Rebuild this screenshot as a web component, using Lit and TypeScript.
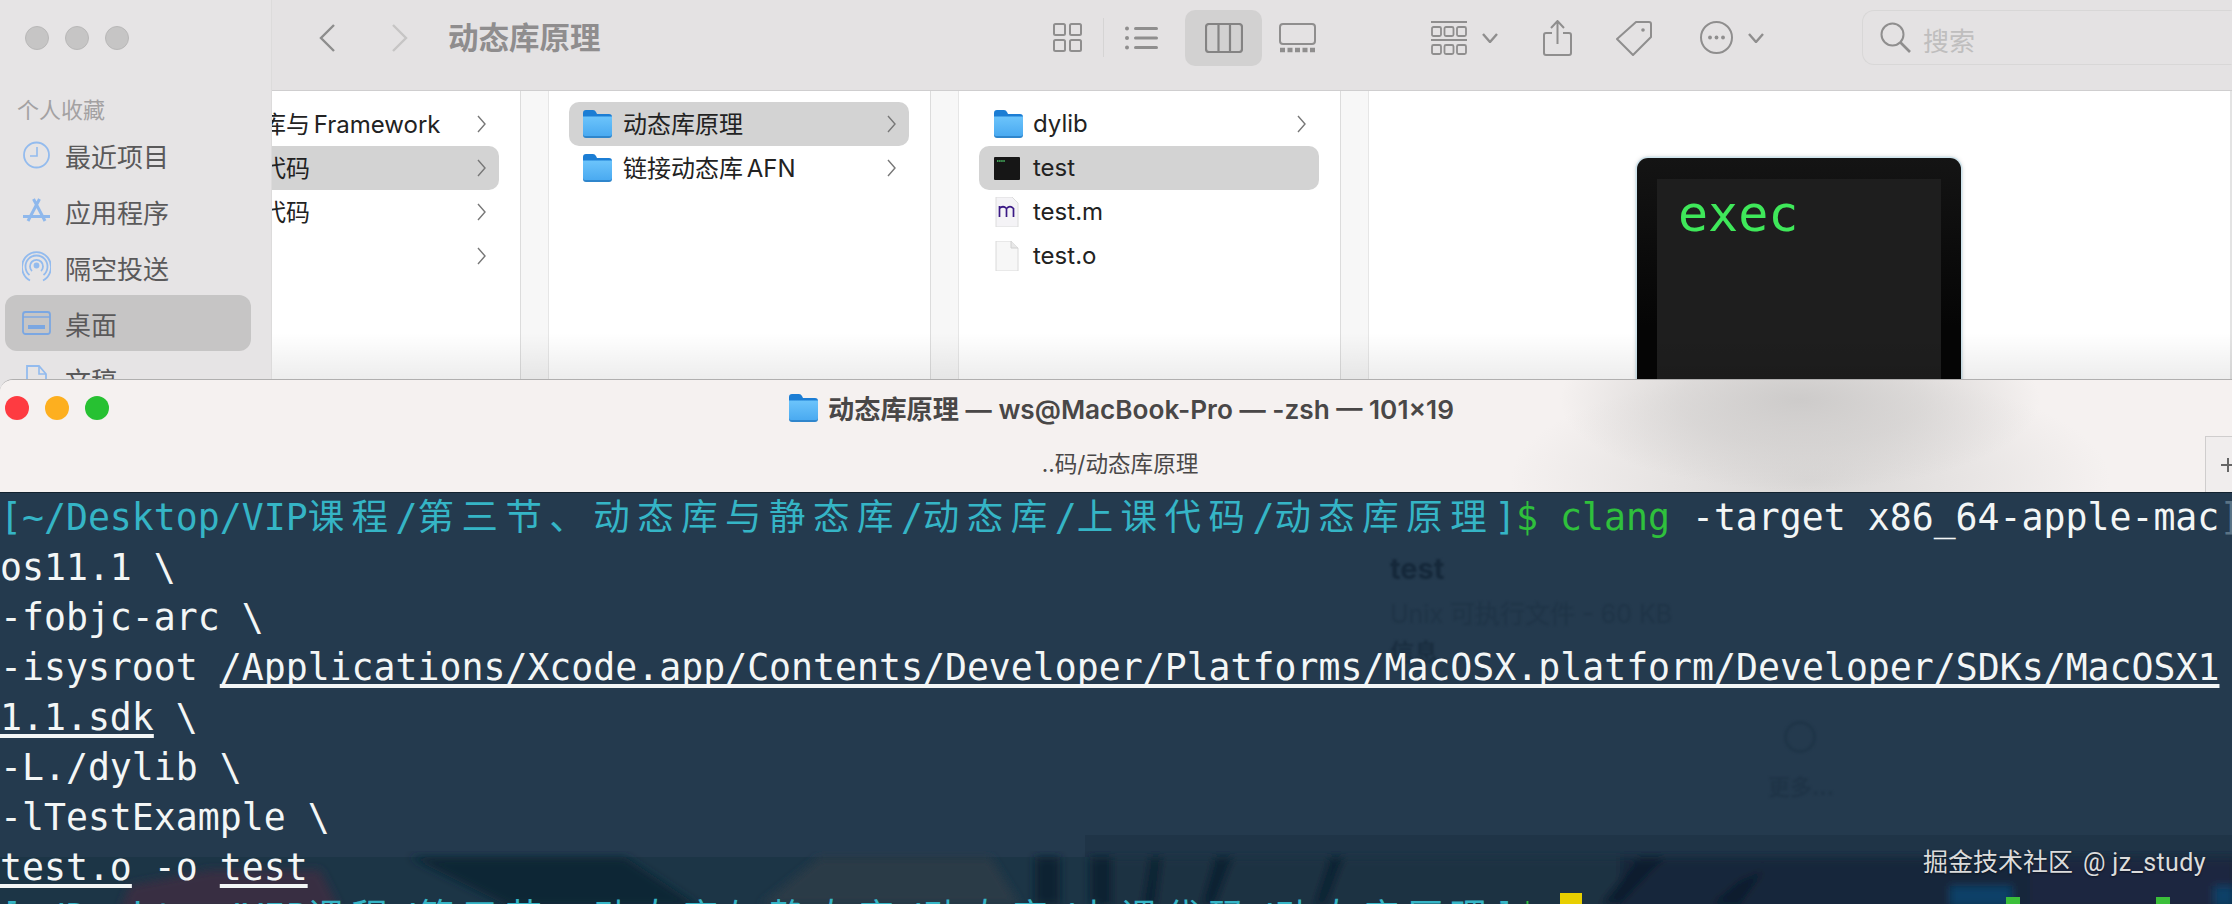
import { LitElement, html, css, svg } from "lit";
import { customElement } from "lit/decorators.js";

const chevron = svg`<svg class="chev" viewBox="0 0 9 18"><path d="M1 1l7 8-7 8" fill="none" stroke="#777" stroke-width="1.4"/></svg>`;

const folder = html`<svg class="folder" viewBox="0 0 29 28">
  <defs><linearGradient id="fb" x1="0" y1="0" x2="0" y2="1"><stop offset="0" stop-color="#6cc4fb"/><stop offset="1" stop-color="#4aaaf1"/></linearGradient></defs>
  <path d="M0 3q0-3 3-3h7q2 0 3 2l1 2h12q3 0 3 3v6H0z" fill="#1b7dd4"/>
  <path d="M0 7h29v18q0 3-3 3H3q-3 0-3-3z" fill="#2f86cc"/>
  <path d="M0 6.5h29V24q0 2-2 2H2q-2 0-2-2z" fill="url(#fb)"/>
</svg>`;

const cjk = (s: string) => html`<span class="cjk">${s}</span>`;

const promptPath = html`[~/Desktop/VIP${cjk("课程")}/${cjk("第三节、动态库与静态库")}/${cjk("动态库")}/${cjk("上课代码")}/${cjk("动态库原理")}]`;

@customElement("app-root")
export class AppRoot extends LitElement {
  static styles = css`
    :host { display: block; width: 2232px; height: 904px; overflow: hidden; background: #e6e4e5;
      font-family: Inter, "Noto Sans CJK SC", sans-serif; }
    * { box-sizing: border-box; }
    svg { display: block; flex: none; }
    .finder { position: relative; display: flex; height: 379px; overflow: hidden; background: #fff; }
    .fade { position: absolute; left: 0; right: 0; bottom: 0; height: 46px; pointer-events: none;
      background: linear-gradient(to bottom, rgba(0,0,0,0), rgba(0,0,0,.07)); }

    .sidebar { width: 272px; flex: none; background: #e6e4e5; padding-top: 26px; overflow: hidden; position: relative; z-index: 1; border-right: 1px solid #dcdbdb; }
    .lights { display: flex; gap: 16px; padding-left: 25px; }
    .lights i { width: 24px; height: 24px; border-radius: 50%; background: #c6c5c5; border: 1px solid #b9b8b8; }
    .label { margin: 46px 0 3px 17px; height: 28px; line-height: 28px; font-size: 22px; color: #a3a1a2; }
    .item { display: flex; align-items: center; height: 56px; margin: 0 20px 0 5px; padding-left: 17px; gap: 14px;
      font-size: 26px; color: #5a595a; border-radius: 12px; white-space: nowrap; }
    .item svg { width: 29px; height: 32px; }
    .item.sel { background: #c6c5c5; }

    .main { flex: 1; min-width: 0; display: flex; flex-direction: column; }
    .toolbar { height: 91px; flex: none; display: flex; align-items: center; padding-bottom: 15px; background: #e4e2e3; border-bottom: 1px solid #cfcecf; }
    .back { margin-left: 47px; width: 16px; height: 28px; }
    .fwd { margin-left: 57px; width: 16px; height: 28px; }
    .title { margin-left: 40px; width: 152px; font-size: 30.5px; font-weight: 700; color: #8f8d8e; white-space: nowrap; line-height: 40px; }
    .t-grid { margin-left: 453px; width: 29px; height: 29px; }
    .sep { margin-left: 21px; width: 1px; height: 39px; background: #d5d4d4; }
    .t-list { margin-left: 21px; width: 33px; height: 24px; }
    .t-colbtn { margin-left: 27px; width: 77px; height: 56px; border-radius: 10px; background: #d2d1d1; display: flex; align-items: center; justify-content: center; }
    .t-col { width: 38px; height: 30px; }
    .t-gal { margin-left: 17px; width: 37px; height: 30px; }
    .t-group { margin-left: 115px; width: 36px; height: 34px; }
    .t-chev { margin-left: 15px; width: 16px; height: 10px; }
    .t-share { margin-left: 45px; width: 29px; height: 36px; }
    .t-tag { margin-left: 44px; width: 36px; height: 36px; }
    .t-more { margin-left: 48px; width: 33px; height: 33px; }
    .search { margin-left: 98px; width: 370px; height: 55px; border: 1.5px solid #d8d7d7; border-right-color: transparent; border-radius: 12px 0 0 12px; display: flex; align-items: center; padding-left: 17px; gap: 12px; font-size: 26px; color: #bfbebe; }
    .search svg { width: 31px; height: 31px; }
    .search span { padding-top: 3px; }

    .cols { flex: 1; display: flex; min-height: 0; }
    .col { flex: none; padding-top: 11px; overflow: hidden; }
    .c1 { width: 248px; }
    .c2 { width: 381px; padding-left: 20px; padding-right: 21px; }
    .c3 { width: 381px; padding-left: 20px; padding-right: 21px; }
    .strip { flex: none; width: 29px; background: #f7f7f7; border-left: 1px solid #dcdcdc; border-right: 1px solid #e6e6e6; }
    .row { display: flex; align-items: center; height: 44px; border-radius: 10px; font-size: 24px; color: #222; white-space: nowrap; padding-left: 14px; padding-right: 13px; }
    .row.sel { background: #d3d3d3; }
    .c1 .row { margin-left: -10px; margin-right: 21px; padding-left: 0; }
    .rowtxt { margin-left: 11px; margin-bottom: 3px; word-spacing: -3px; }
    .c1 .rowtxt { margin-left: 0; }
    .c3 .rowtxt { margin-left: 13px; margin-bottom: 2px; }
    .c3 .folder + .rowtxt { margin-left: 10px; }
    .folder { width: 29px; height: 28px; }
    .c3 .row { padding-left: 15px; }
    .chev { width: 9px; height: 18px; margin-left: auto; }
    .ficon { width: 26px; height: 30px; }
    .preview { flex: 1; min-width: 0; padding: 67px 0 0 268px; border-right: 2px solid #e3e3e3; overflow: hidden; }
    .bigicon { width: 324px; height: 240px; background: linear-gradient(#141414, #050505 70%); border-radius: 11px 11px 0 0; padding: 21px 20px 0; box-shadow: 0 0 0 1.5px #cfe5ee, 0 0 5px rgba(0,0,0,.25); }
    .screen { height: 219px; background: #1e1e1e; padding: 0 21px; font-family: "DejaVu Sans Mono", monospace; font-size: 50px; line-height: 70px; color: #3fe85a; }

    .term { position: relative; height: 525px; border-top: 1px solid #b0afaf; border-radius: 13px 0 0 0; overflow: hidden; display: flex; flex-direction: column; background: #f5f1f0; }
    .head { position: relative; height: 112px; flex: none;
      background: radial-gradient(ellipse 240px 90px at 1800px 20px, #cdcbca 0%, rgba(205,203,202,.6) 50%, rgba(245,241,240,0) 100%),
                  radial-gradient(ellipse 300px 110px at 1810px 100px, rgba(214,212,211,.9) 0%, rgba(245,241,240,0) 100%), #f5f1f0; }
    .tl { display: flex; gap: 16px; padding: 16px 0 0 5px; position: absolute; left: 0; top: 0; }
    .tl i { width: 24px; height: 24px; border-radius: 50%; }
    .r { background: #fe3b41; } .y { background: #fdaf1f; } .g { background: #27c132; }
    .ttl { display: flex; align-items: center; justify-content: center; gap: 10px; height: 54px; padding: 1px 0 0 11px; font-size: 26.2px; font-weight: 600; color: #494747; white-space: nowrap; }
    .ttl .folder { width: 29px; height: 28px; }
    .sub { text-align: center; font-size: 22.6px; line-height: 30px; margin-top: 15px; padding-left: 8px; color: #4a4848; }
    .plus { position: absolute; right: 0; bottom: 0; width: 27px; height: 56px; background: #f0eded; border: 1px solid #cfcdcd; border-right: 0; border-bottom: 0; }
    .plus::before { content: ""; position: absolute; left: 15px; top: 27px; width: 12px; height: 2px; background: #666; }
    .plus::after { content: ""; position: absolute; left: 21px; top: 21px; width: 2px; height: 14px; background: #666; }

    .body { position: relative; flex: 1; min-height: 0; overflow: hidden; background: #243a4e; border-top: 1px solid #12222f; }
    .wall { position: absolute; left: 0; bottom: 0; width: 2232px; height: 69px; }
    .ghost { position: absolute; left: 0; top: 0; color: #1a2d3f; filter: blur(1.2px); white-space: nowrap; font-family: Inter, "Noto Sans CJK SC", sans-serif; }
    .gh-name { left: 1390px; top: 58px; font-size: 29px; font-weight: 700; color: #15283a; }
    .gh-kind { left: 1390px; top: 101px; font-size: 25px; color: #1f3447; }
    .gh-info { left: 1390px; top: 140px; font-size: 24px; font-weight: 700; color: #1a2e40; }
    .gh-more { left: 1768px; top: 276px; font-size: 22px; font-weight: 700; color: #1f3447; }
    .gh-circ { left: 1784px; top: 228px; width: 32px; height: 32px; border: 3px solid #1f3548; border-radius: 50%; }
    .text { position: relative; font-family: "DejaVu Sans Mono", "Noto Sans CJK SC", monospace; font-size: 36.5px; color: #f3f6f6; }
    .ln { height: 50px; line-height: 50px; white-space: pre; }
    .cjk { font-family: "Noto Sans CJK SC", sans-serif; letter-spacing: 7.44px; line-height: 0; }
    .cy { color: #35b5c6; }
    .gr { color: #2fc03c; }
    .u { text-decoration: underline; text-decoration-thickness: 4px; text-underline-offset: 4px; text-decoration-skip-ink: none; }
    .edge { color: #5b7385; }
    .cur { display: inline-block; width: 22px; height: 44px; background: #e8cf00; vertical-align: top; }
    .mark { position: absolute; right: 26px; bottom: 25px; font-size: 25px; line-height: 32px; color: #dcdcdc; white-space: nowrap; text-shadow: 0 1px 2px rgba(0,0,0,.5); }
    .mark b { font-weight: 400; font-family: Roboto, sans-serif; margin-left: 10px; letter-spacing: .4px; }
  `;

  render() {
    const g = "#8f8e8e";
    return html`
      <div class="finder">
        <div class="sidebar">
          <div class="lights"><i></i><i></i><i></i></div>
          <div class="label">个人收藏</div>
          <div class="item"><svg viewBox="0 0 29 32"><circle cx="14.5" cy="16" r="12.5" fill="none" stroke="#93bbee" stroke-width="1.8"/><path d="M15 8v9H8" fill="none" stroke="#93bbee" stroke-width="1.6"/></svg>最近项目</div>
          <div class="item"><svg viewBox="0 0 29 32"><path d="M17.5 4L6 26M11.500 4L23 26" fill="none" stroke="#8fb8ec" stroke-width="3"/><path d="M1 21.500h27" stroke="#8fb8ec" stroke-width="3"/></svg>应用程序</div>
          <div class="item"><svg viewBox="0 0 29 32" fill="none" stroke="#93bbee" stroke-width="1.8"><circle cx="14.5" cy="14.5" r="2" fill="#93bbee"/><path d="M10 20a6.5 6.5 0 1 1 9 0"/><path d="M7.5 24a11 11 0 1 1 14 0"/><path d="M8 29.5A14.5 15 0 1 1 21 29.5"/></svg>隔空投送</div>
          <div class="item sel"><svg viewBox="0 0 29 32"><rect x="1" y="5" width="27" height="22" rx="2.5" fill="none" stroke="#7ba7e2" stroke-width="1.8"/><path d="M1 10h27" stroke="#7ba7e2" stroke-width="1.4"/><rect x="6" y="18" width="17" height="4" fill="#7ba7e2"/></svg>桌面</div>
          <div class="item"><svg viewBox="0 0 29 32"><path d="M5 3h12l7 8v18H5z" fill="none" stroke="#93bbee" stroke-width="1.8"/><path d="M17 3v8h7" fill="none" stroke="#93bbee" stroke-width="1.6"/></svg>文稿</div>
        </div>
        <div class="main">
          <div class="toolbar">
            <svg class="back" viewBox="0 0 16 28"><path d="M15 1L2 14l13 13" fill="none" stroke="#8d8d8d" stroke-width="2.4"/></svg>
            <svg class="fwd" viewBox="0 0 16 28"><path d="M1 1l13 13L1 27" fill="none" stroke="#c6c5c5" stroke-width="2.4"/></svg>
            <div class="title">动态库原理</div>
            <svg class="t-grid" viewBox="0 0 29 29" fill="none" stroke="${g}" stroke-width="2"><rect x="1" y="1" width="11" height="11" rx="1.5"/><rect x="17" y="1" width="11" height="11" rx="1.5"/><rect x="1" y="17" width="11" height="11" rx="1.5"/><rect x="17" y="17" width="11" height="11" rx="1.5"/></svg>
            <div class="sep"></div>
            <svg class="t-list" viewBox="0 0 33 24" fill="${g}"><circle cx="2" cy="2.5" r="2"/><circle cx="2" cy="12" r="2"/><circle cx="2" cy="21.5" r="2"/><rect x="9" y="1" width="24" height="3" rx="1.5"/><rect x="9" y="10.5" width="24" height="3" rx="1.5"/><rect x="9" y="20" width="24" height="3" rx="1.5"/></svg>
            <div class="t-colbtn"><svg class="t-col" viewBox="0 0 38 30" fill="none" stroke="#848383" stroke-width="2.2"><rect x="1" y="1" width="36" height="28" rx="3"/><path d="M13.5 1v28M25 1v28"/></svg></div>
            <svg class="t-gal" viewBox="0 0 37 30" fill="none" stroke="${g}" stroke-width="2"><rect x="1" y="1" width="35" height="20" rx="3"/><path d="M1 27h35" stroke-width="4.5" stroke-dasharray="5 2.5"/></svg>
            <svg class="t-group" viewBox="0 0 36 34" fill="none" stroke="${g}" stroke-width="1.8"><path d="M0 1h36M0 19h36" stroke-width="2"/><rect x="1" y="6" width="9" height="9" rx="1.5"/><rect x="13.5" y="6" width="9" height="9" rx="1.5"/><rect x="26" y="6" width="9" height="9" rx="1.5"/><rect x="1" y="24" width="9" height="9" rx="1.5"/><rect x="13.5" y="24" width="9" height="9" rx="1.5"/><rect x="26" y="24" width="9" height="9" rx="1.5"/></svg>
            <svg class="t-chev" viewBox="0 0 16 10"><path d="M1 1l7 8 7-8" fill="none" stroke="${g}" stroke-width="2.4"/></svg>
            <svg class="t-share" viewBox="0 0 29 36" fill="none" stroke="${g}" stroke-width="2"><path d="M9 13H3q-2 0-2 2v18q0 2 2 2h23q2 0 2-2V15q0-2-2-2h-6"/><path d="M14.5 24V2M8 8l6.5-7L21 8"/></svg>
            <svg class="t-tag" viewBox="0 0 36 36" fill="none" stroke="${g}" stroke-width="2"><path d="M20 2h13q2 0 2 2v13L17 35 1 19z" stroke-linejoin="round"/><circle cx="27" cy="10" r="1.8" fill="${g}" stroke="none"/></svg>
            <svg class="t-more" viewBox="0 0 33 33" fill="none" stroke="${g}" stroke-width="2"><circle cx="16.5" cy="16.5" r="15.5"/><g fill="${g}" stroke="none"><circle cx="10" cy="16.5" r="1.9"/><circle cx="16.5" cy="16.5" r="1.9"/><circle cx="23" cy="16.5" r="1.9"/></g></svg>
            <svg class="t-chev" viewBox="0 0 16 10"><path d="M1 1l7 8 7-8" fill="none" stroke="${g}" stroke-width="2.4"/></svg>
            <div class="search"><svg viewBox="0 0 31 31" fill="none" stroke="#8f8e8e" stroke-width="2"><circle cx="12.5" cy="12.5" r="11"/><path d="M20.5 20.5L30 30" stroke-width="2.6"/></svg><span>搜索</span></div>
          </div>
          <div class="cols">
            <div class="col c1">
              <div class="row"><span class="rowtxt">库与 Framework</span>${chevron}</div>
              <div class="row sel"><span class="rowtxt">代码</span>${chevron}</div>
              <div class="row"><span class="rowtxt">代码</span>${chevron}</div>
              <div class="row">${chevron}</div>
            </div>
            <div class="strip"></div>
            <div class="col c2">
              <div class="row sel">${folder}<span class="rowtxt">动态库原理</span>${chevron}</div>
              <div class="row">${folder}<span class="rowtxt">链接动态库 AFN</span>${chevron}</div>
            </div>
            <div class="strip"></div>
            <div class="col c3">
              <div class="row">${folder}<span class="rowtxt">dylib</span>${chevron}</div>
              <div class="row sel"><svg class="ficon" viewBox="0 0 26 30"><rect x="0" y="4" width="26" height="23" rx="1" fill="#161616"/><path d="M3 8h8" stroke="#4ecb6a" stroke-width="1.6" stroke-dasharray="1.5 .6"/></svg><span class="rowtxt">test</span></div>
              <div class="row"><svg class="ficon" viewBox="0 0 26 30"><path d="M2 0h16l6 6v24H2z" fill="#f4f3f6" stroke="#dcdcdc"/><path d="M5.500 20V9m0 2.500q3.500-3.500 7 0V20m0-8.500q3.500-3.500 7 0V20" fill="none" stroke="#3b1a86" stroke-width="1.7"/></svg><span class="rowtxt">test.m</span></div>
              <div class="row"><svg class="ficon" viewBox="0 0 26 30"><path d="M2 0h15l7 7v23H2z" fill="#f7f7f7" stroke="#dadada"/><path d="M17 0v7h7" fill="#e8e8e8" stroke="#d0d0d0"/></svg><span class="rowtxt">test.o</span></div>
            </div>
            <div class="strip"></div>
            <div class="preview"><div class="bigicon"><div class="screen">exec</div></div></div>
          </div>
        </div>
        <div class="fade"></div>
      </div>
      <div class="term">
        <div class="head">
          <div class="tl"><i class="r"></i><i class="y"></i><i class="g"></i></div>
          <div class="ttl">${folder}<span>动态库原理 — ws@MacBook-Pro — -zsh — 101×19</span></div>
          <div class="sub">..码/动态库原理</div>
          <div class="plus"></div>
        </div>
        <div class="body">
          <svg class="wall" viewBox="0 835 2232 69" preserveAspectRatio="none">
            <defs><filter id="bl"><feGaussianBlur stdDeviation="4"/></filter></defs>
            <rect x="1085" y="835" width="1147" height="22" fill="#1f3447"/>
            <rect x="0" y="857" width="2232" height="47" fill="#1c3546"/>
            <g filter="url(#bl)">
              <rect x="1100" y="857" width="520" height="60" fill="#1a3142"/>
              <rect x="1620" y="857" width="620" height="60" fill="#17263a"/>
              <path d="M130 885l80-15h110l20 40H120z" fill="#392d43"/>
              <path d="M410 857h215l75 50H510z" fill="#0f2536"/>
              <path d="M760 905l60-48h170l30 48z" fill="#2a3a46"/>
              <path d="M1035 857h25v48h-25zM1090 857h22v48h-22zM1150 857h12l-6 48h-14zM1215 857h18l-18 48h-14zM1330 857h14l-18 48h-12z" fill="#0f2433"/>
              <path d="M1640 857l-40 48h20l45-48zM1740 880l-30 25h30l25-35z" fill="#0f1e2e"/>
              <path d="M2030 860h202v45H2030z" fill="#1f2541"/>
              <path d="M1950 886h62v20h-62zM2214 886h20v20h-20z" fill="#114068"/>
            </g>
            <path d="M2006 897h14v8h-14zM2156 897h14v8h-14z" fill="#3bbf3a"/>
          </svg>
          <div class="ghost gh-name">test</div>
          <div class="ghost gh-kind">Unix 可执行文件 - 60 KB</div>
          <div class="ghost gh-info">信息</div>
          <div class="ghost gh-circ"></div>
          <div class="ghost gh-more">更多...</div>
          <div class="text">
            <div class="ln"><span class="cy">${promptPath}</span><span class="gr">$ clang</span> -target x86_64-apple-mac<span class="edge">]</span></div>
            <div class="ln">os11.1 \\</div>
            <div class="ln">-fobjc-arc \\</div>
            <div class="ln">-isysroot <span class="u">/Applications/Xcode.app/Contents/Developer/Platforms/MacOSX.platform/Developer/SDKs/MacOSX1</span></div>
            <div class="ln"><span class="u">1.1.sdk</span> \\</div>
            <div class="ln">-L./dylib \\</div>
            <div class="ln">-lTestExample \\</div>
            <div class="ln"><span class="u">test.o</span> -o <span class="u">test</span></div>
            <div class="ln"><span class="cy">${promptPath}</span><span class="gr">$ </span><span class="cur"></span></div>
          </div>
          <div class="mark">掘金技术社区<b>@ jz_study</b></div>
        </div>
      </div>
    `;
  }
}
